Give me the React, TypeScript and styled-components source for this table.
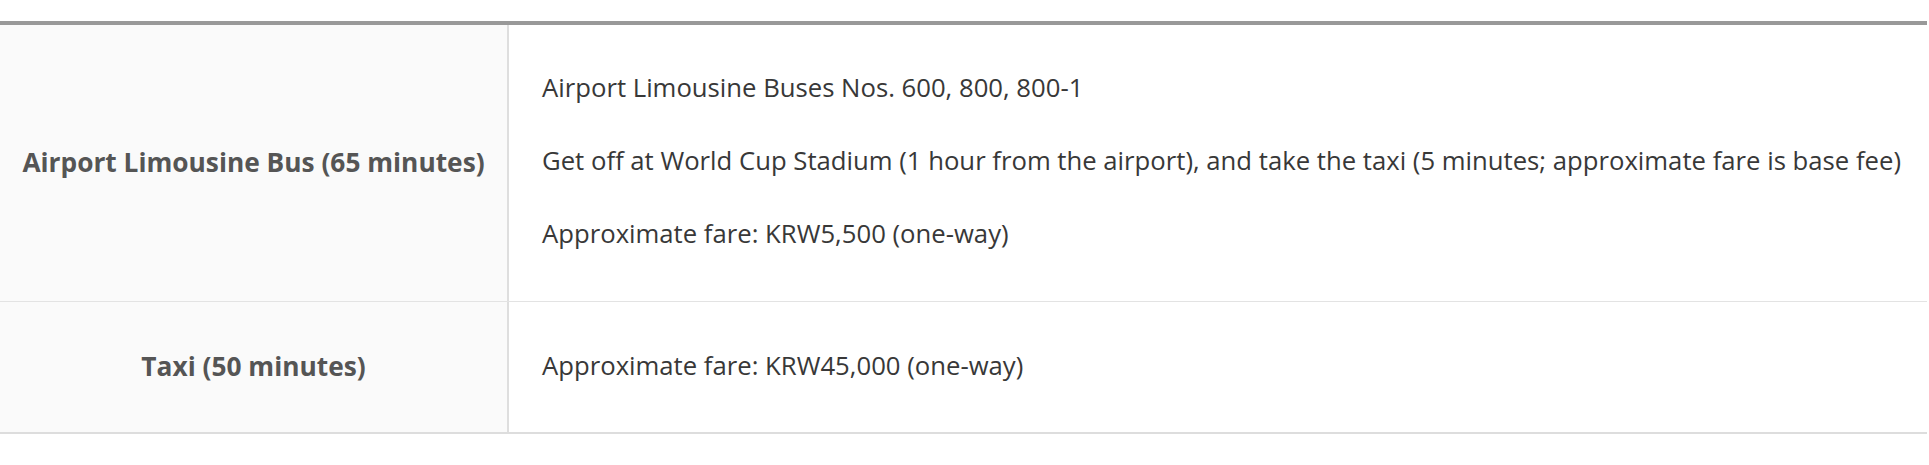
import React from "react";
import styled, { createGlobalStyle } from "styled-components";

const GlobalStyle = createGlobalStyle`
  html, body {
    margin: 0;
    padding: 0;
    background: #ffffff;
  }
  body {
    font-family: "Open Sans", "Noto Sans", "Liberation Sans", sans-serif;
  }
`;

const Page = styled.div`
  padding-top: 21px;
  width: 1927px;
`;

const Table = styled.div`
  display: flex;
  flex-direction: column;
  border-top: 4px solid #999999;
  border-bottom: 2px solid #dddddd;
`;

const Row = styled.div<{ $last?: boolean }>`
  display: grid;
  grid-template-columns: 509px 1fr;
  border-bottom: ${(p) => (p.$last ? "none" : "1px solid #e3e3e3")};
`;

const HeadCell = styled.div`
  display: flex;
  align-items: center;
  justify-content: center;
  padding-bottom: 2px;
  background: #fafafa;
  border-right: 2px solid #dedede;
  color: #555555;
  font-size: 26.3px;
  font-weight: 700;
`;

const DataCell = styled.div<{ $padTop: number; $padBottom: number }>`
  display: flex;
  flex-direction: column;
  justify-content: center;
  gap: 33px;
  padding: ${(p) => p.$padTop}px 20px ${(p) => p.$padBottom}px 33px;
  color: #383838;
  font-size: 25.7px;
  line-height: 40px;
`;

const Para = styled.p`
  margin: 0;
  white-space: nowrap;
`;

type Entry = { title: string; lines: string[]; padTop: number; padBottom: number };

const entries: Entry[] = [
  {
    title: "Airport Limousine Bus (65 minutes)",
    lines: [
      "Airport Limousine Buses Nos. 600, 800, 800-1",
      "Get off at World Cup Stadium (1 hour from the airport), and take the taxi (5 minutes; approximate fare is base fee)",
      "Approximate fare: KRW5,500 (one-way)",
    ],
    padTop: 43,
    padBottom: 47,
  },
  {
    title: "Taxi (50 minutes)",
    lines: ["Approximate fare: KRW45,000 (one-way)"],
    padTop: 44,
    padBottom: 46,
  },
];

export default function App() {
  return (
    <>
      <GlobalStyle />
      <Page>
        <Table>
          {entries.map((e, i) => (
            <Row key={e.title} $last={i === entries.length - 1}>
              <HeadCell>{e.title}</HeadCell>
              <DataCell $padTop={e.padTop} $padBottom={e.padBottom}>
                {e.lines.map((l) => (
                  <Para key={l}>{l}</Para>
                ))}
              </DataCell>
            </Row>
          ))}
        </Table>
      </Page>
    </>
  );
}
